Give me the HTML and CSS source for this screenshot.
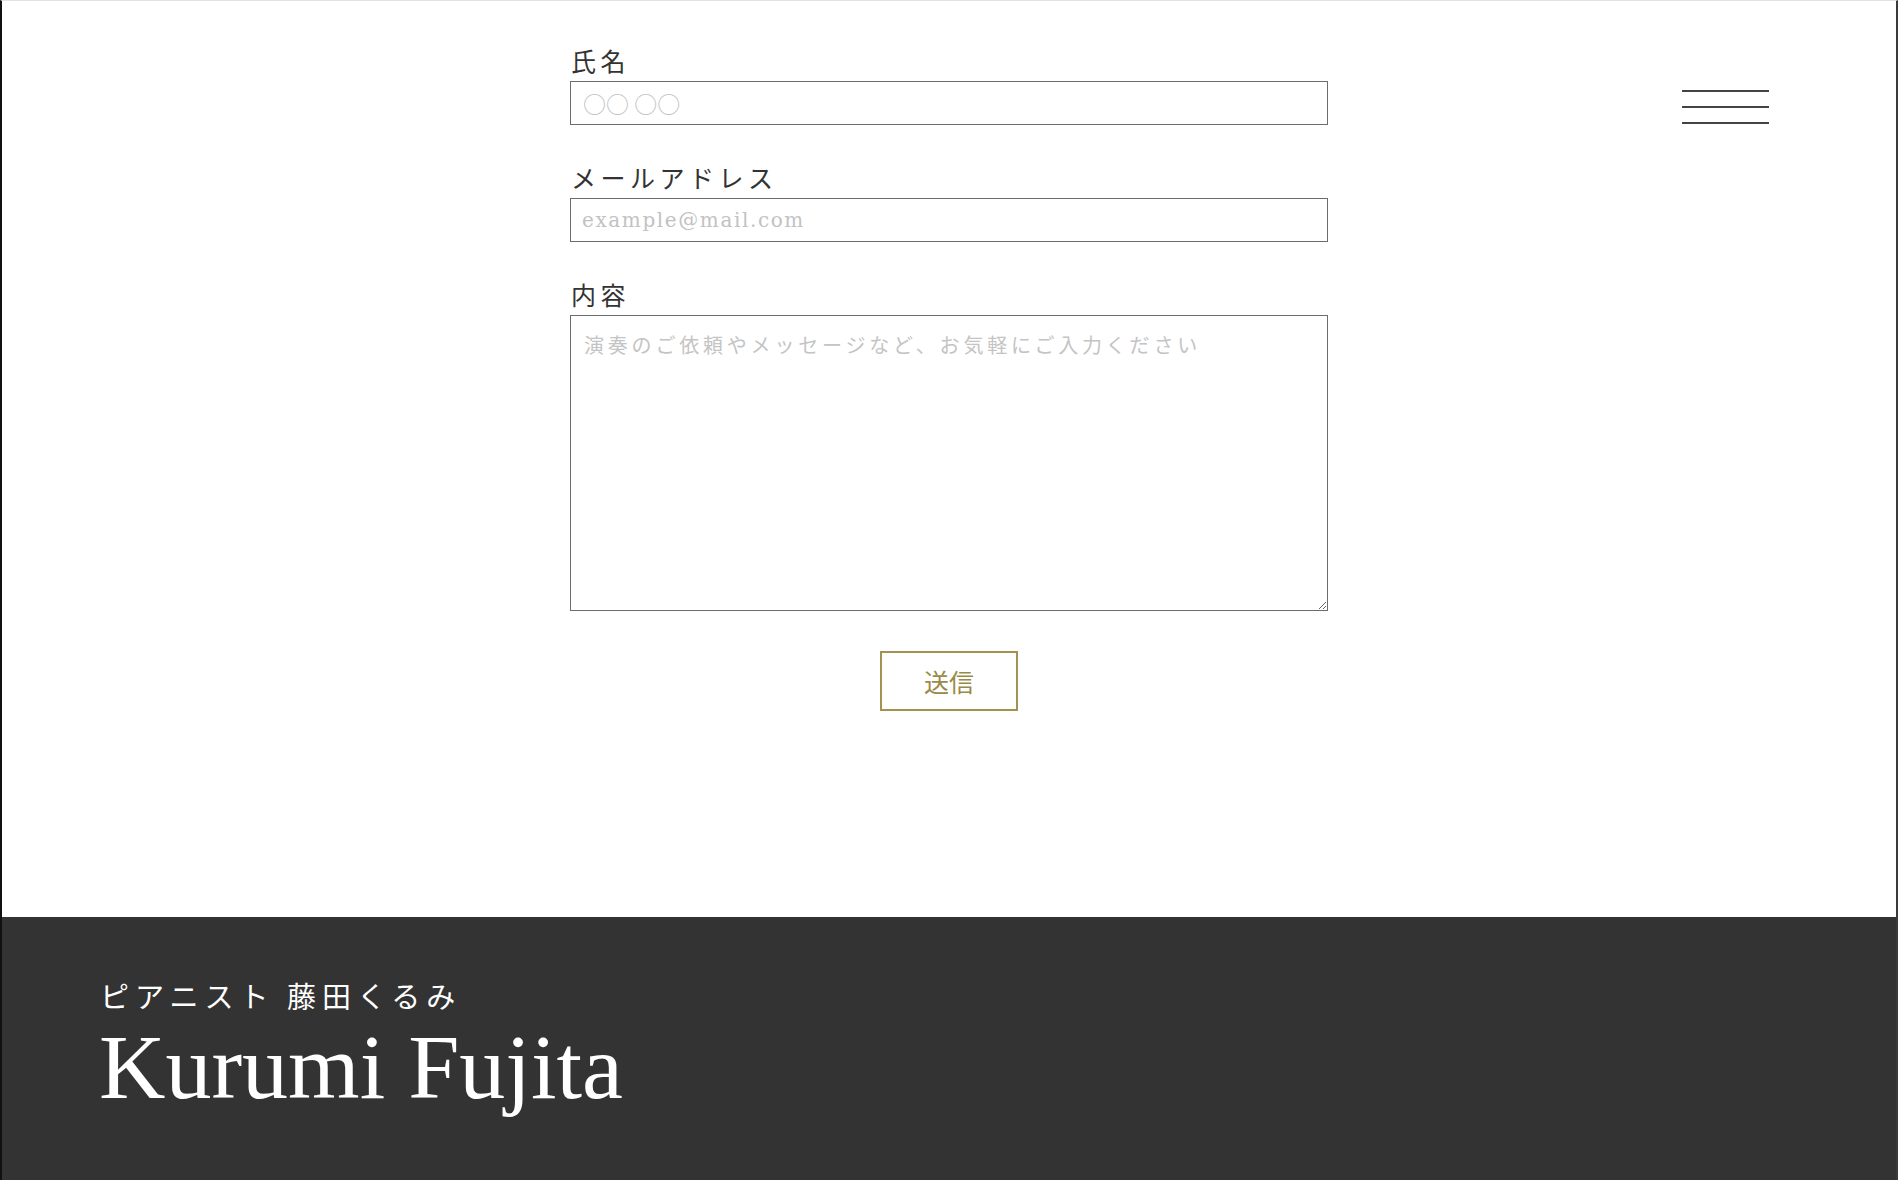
FILE: index.html
```html
<!DOCTYPE html>
<html lang="ja">
<head>
<meta charset="utf-8">
<title>Contact | Kurumi Fujita</title>
<link rel="stylesheet" href="styles.css">
</head>
<body>
<div class="page">
  <button class="menu-btn" type="button" aria-label="メニュー">
    <span class="menu-line"></span>
    <span class="menu-line"></span>
    <span class="menu-line"></span>
  </button>
  <main class="main">
    <form class="contact-form" onsubmit="return false;">
      <div class="field">
        <label class="field-label" for="name">氏名</label>
        <input class="field-input field-input-name" id="name" type="text" placeholder="○○ ○○">
      </div>
      <div class="field">
        <label class="field-label" for="email">メールアドレス</label>
        <input class="field-input" id="email" type="email" placeholder="example@mail.com">
      </div>
      <div class="field">
        <label class="field-label" for="message">内容</label>
        <textarea class="field-textarea" id="message" placeholder="演奏のご依頼やメッセージなど、お気軽にご入力ください"></textarea>
      </div>
      <div class="actions">
        <button class="submit-btn" type="submit">送信</button>
      </div>
    </form>
  </main>
  <footer class="footer">
    <p class="footer-sub">ピアニスト 藤田くるみ</p>
    <p class="footer-name">Kurumi Fujita</p>
  </footer>
</div>
</body>
</html>
```

FILE: styles.css
```css
html, body {
  margin: 0;
  padding: 0;
  background: #ffffff;
}

body {
  font-family: "Noto Sans CJK JP", "Liberation Serif", serif;
  color: #333333;
}

.page {
  position: relative;
  min-height: 1179px;
  border-top: 1px solid #e2e2e2;
  border-left: 2px solid #111111;
  border-right: 2px solid #3a3a3a;
  display: flex;
  flex-direction: column;
}

.menu-btn {
  position: absolute;
  top: 89px;
  right: 127px;
  width: 87px;
  height: 34px;
  padding: 0;
  margin: 0;
  border: none;
  background: transparent;
  display: flex;
  flex-direction: column;
  justify-content: space-between;
  cursor: pointer;
}

.menu-line {
  display: block;
  width: 100%;
  height: 2px;
  background: #444444;
}

.main {
  padding: 42px 0 206px;
}

.contact-form {
  width: 758px;
  margin: 0 auto;
  display: flex;
  flex-direction: column;
  gap: 35px;
}

.field {
  display: flex;
  flex-direction: column;
  gap: 4px;
}

.field-label {
  font-size: 25px;
  line-height: 34px;
  letter-spacing: 4.5px;
  color: #333333;
  padding-left: 1px;
}

.field-input {
  box-sizing: border-box;
  width: 100%;
  height: 44px;
  margin: 0;
  padding: 0 11px;
  border: 1px solid #6c6c6c;
  border-radius: 0;
  background: #ffffff;
  font-family: "DejaVu Serif", "Noto Sans CJK JP", serif;
  font-size: 20px;
  letter-spacing: 1.6px;
  color: #333333;
  outline: none;
}

.field-input-name {
  font-family: "Noto Sans CJK JP", sans-serif;
  font-size: 23px;
  letter-spacing: 0;
  padding-left: 12px;
}

.field-input::placeholder {
  color: #c2c2c2;
}

.field-textarea {
  box-sizing: border-box;
  width: 100%;
  height: 296px;
  margin: 0;
  padding: 14px 13px;
  border: 1px solid #6c6c6c;
  border-radius: 0;
  background: #ffffff;
  font-family: "Noto Sans CJK JP", sans-serif;
  font-size: 20px;
  line-height: 30px;
  letter-spacing: 3.8px;
  color: #333333;
  resize: vertical;
  outline: none;
}

.field-textarea::placeholder {
  color: #c4c4c4;
}

.actions {
  display: flex;
  justify-content: center;
  padding-top: 5px;
}

.submit-btn {
  box-sizing: border-box;
  width: 138px;
  height: 60px;
  margin: 0;
  padding: 0;
  border: 2px solid #a39350;
  background: #ffffff;
  color: #9a8a48;
  font-family: "Noto Sans CJK JP", sans-serif;
  font-size: 25px;
  line-height: 1;
  cursor: pointer;
}

.footer {
  flex: 1;
  background: #333333;
  color: #ffffff;
  padding: 58px 100px 0;
}

.footer-sub {
  margin: 0 0 0 -2px;
  font-size: 29px;
  line-height: 40px;
  letter-spacing: 6px;
}

.footer-name {
  margin: 6px 0 0 -3px;
  font-family: "Liberation Serif", serif;
  font-size: 92px;
  line-height: 92px;
  font-weight: 400;
}
```
